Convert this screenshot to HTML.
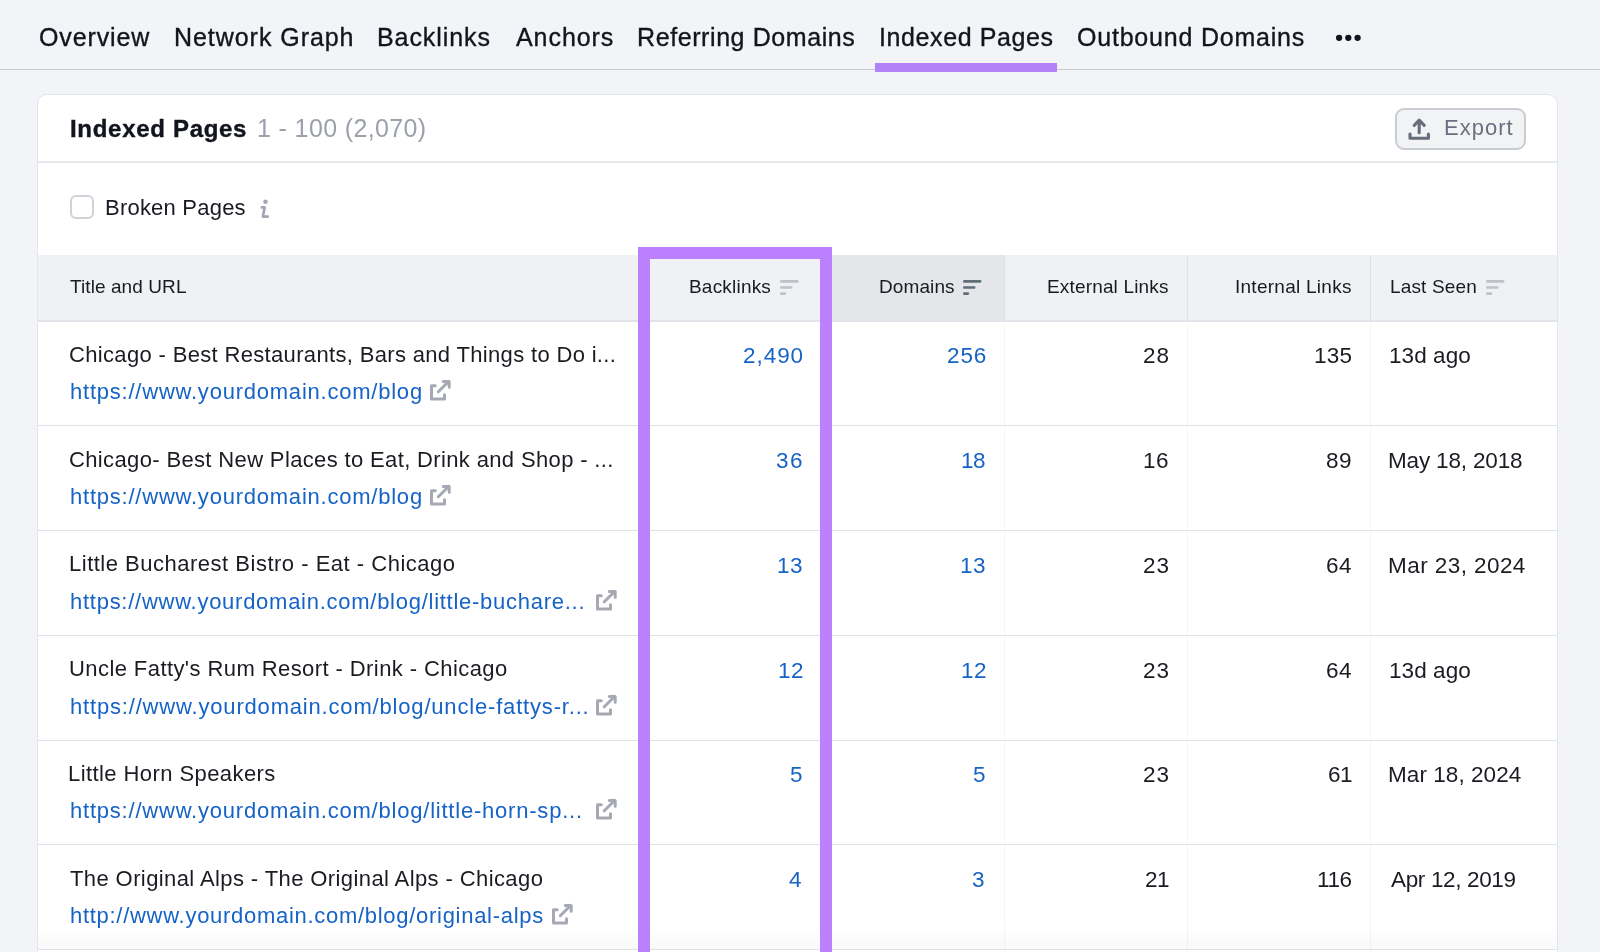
<!DOCTYPE html>
<html><head><meta charset="utf-8"><style>
html,body{margin:0;padding:0;}
body{width:1600px;height:952px;overflow:hidden;background:#f3f4f8;position:relative;font-family:"Liberation Sans", sans-serif;}
.t{position:absolute;white-space:nowrap;will-change:transform;}
</style></head><body>
<div style="position:absolute;left:0px;top:69px;width:1600px;height:1px;background:#c4c7cd;"></div>
<div style="position:absolute;left:875px;top:63px;width:182px;height:9px;background:#b283f8;"></div>
<svg style="position:absolute;left:1330px;top:30px" width="40" height="16" viewBox="0 0 40 16"><circle cx="9.1" cy="7.85" r="3.15" fill="#12151d"/><circle cx="18.3" cy="7.85" r="3.15" fill="#12151d"/><circle cx="27.6" cy="7.85" r="3.15" fill="#12151d"/></svg>
<div style="position:absolute;left:37px;top:94px;width:1519px;height:900px;background:#fff;border:1px solid #e4e5ea;border-radius:10px"></div>
<div style="position:absolute;left:38px;top:161px;width:1519px;height:2px;background:#e7e8ec;"></div>
<div style="position:absolute;left:1395px;top:107.5px;width:126.5px;height:38.3px;background:#f2f3f5;border:2px solid #c9ccd3;border-radius:9px"></div>
<svg style="position:absolute;left:1407px;top:117px" width="24" height="24" viewBox="0 0 24 24"><path d="M12.2 4 V15.8 M7.2 8.3 L12.2 3.2 L17.2 8.3" stroke="#686d7b" stroke-width="3.1" fill="none" stroke-linecap="round" stroke-linejoin="round"/><path d="M3 17 V21.2 H21.4 V17" stroke="#686d7b" stroke-width="3.1" fill="none" stroke-linecap="round" stroke-linejoin="round"/></svg>
<div style="position:absolute;left:69.5px;top:195.2px;width:20px;height:20px;background:#fff;border:2px solid #d0d2d9;border-radius:6px"></div>
<svg style="position:absolute;left:258px;top:198px" width="14" height="22" viewBox="0 0 14 22"><circle cx="7.5" cy="3.8" r="2.3" fill="#a3a7b2"/><path d="M3.8 9.4 L6.6 9.4 L4.9 18.6 L9.7 18.6" stroke="#a3a7b2" stroke-width="2.7" fill="none" stroke-linecap="round" stroke-linejoin="round"/></svg>
<div style="position:absolute;left:38px;top:255px;width:1519px;height:65px;background:#f0f1f4;"></div>
<div style="position:absolute;left:821px;top:255px;width:183px;height:65px;background:#e5e6e9;"></div>
<div style="position:absolute;left:38px;top:320px;width:1519px;height:2px;background:#e3e4e9;"></div>
<div style="position:absolute;left:1004px;top:255px;width:1px;height:65px;background:#e0e1e6;"></div>
<div style="position:absolute;left:1004px;top:322px;width:1px;height:700px;background:#f6f6f7;"></div>
<div style="position:absolute;left:1187px;top:255px;width:1px;height:65px;background:#e0e1e6;"></div>
<div style="position:absolute;left:1187px;top:322px;width:1px;height:700px;background:#f6f6f7;"></div>
<div style="position:absolute;left:1370px;top:255px;width:1px;height:65px;background:#e0e1e6;"></div>
<div style="position:absolute;left:1370px;top:322px;width:1px;height:700px;background:#f6f6f7;"></div>
<svg style="position:absolute;left:780px;top:279px" width="20" height="17" viewBox="0 0 20 17"><path d="M1.3 2.4 H17.2 M1.3 8.5 H11.2 M1.3 14.6 H4.9" stroke="#bcc2c6" stroke-width="2.6" stroke-linecap="round"/></svg>
<svg style="position:absolute;left:963px;top:279px" width="20" height="17" viewBox="0 0 20 17"><path d="M1.3 2.4 H17.2 M1.3 8.5 H11.2 M1.3 14.6 H4.9" stroke="#5f6e78" stroke-width="2.6" stroke-linecap="round"/></svg>
<svg style="position:absolute;left:1486px;top:279px" width="20" height="17" viewBox="0 0 20 17"><path d="M1.3 2.4 H17.2 M1.3 8.5 H11.2 M1.3 14.6 H4.9" stroke="#bcc2c6" stroke-width="2.6" stroke-linecap="round"/></svg>
<svg style="position:absolute;left:429.00px;top:379.20px" width="22" height="22" viewBox="0 0 22 22"><path d="M6.25 6.75 H2.5 V20 H15.5 V15.75" stroke="#a6a9b4" stroke-width="3" fill="none" stroke-linecap="round" stroke-linejoin="round"/><path d="M9.3 12.8 L19.8 2.3 M14.3 2.5 H20.2 V8.2" stroke="#a6a9b4" stroke-width="3" fill="none" stroke-linecap="round" stroke-linejoin="round"/></svg>
<div style="position:absolute;left:38px;top:425px;width:1519px;height:1px;background:#dfe3e5;"></div>
<svg style="position:absolute;left:429.00px;top:484.00px" width="22" height="22" viewBox="0 0 22 22"><path d="M6.25 6.75 H2.5 V20 H15.5 V15.75" stroke="#a6a9b4" stroke-width="3" fill="none" stroke-linecap="round" stroke-linejoin="round"/><path d="M9.3 12.8 L19.8 2.3 M14.3 2.5 H20.2 V8.2" stroke="#a6a9b4" stroke-width="3" fill="none" stroke-linecap="round" stroke-linejoin="round"/></svg>
<div style="position:absolute;left:38px;top:530px;width:1519px;height:1px;background:#dfe3e5;"></div>
<svg style="position:absolute;left:595.00px;top:588.80px" width="22" height="22" viewBox="0 0 22 22"><path d="M6.25 6.75 H2.5 V20 H15.5 V15.75" stroke="#a6a9b4" stroke-width="3" fill="none" stroke-linecap="round" stroke-linejoin="round"/><path d="M9.3 12.8 L19.8 2.3 M14.3 2.5 H20.2 V8.2" stroke="#a6a9b4" stroke-width="3" fill="none" stroke-linecap="round" stroke-linejoin="round"/></svg>
<div style="position:absolute;left:38px;top:635px;width:1519px;height:1px;background:#dfe3e5;"></div>
<svg style="position:absolute;left:595.00px;top:693.60px" width="22" height="22" viewBox="0 0 22 22"><path d="M6.25 6.75 H2.5 V20 H15.5 V15.75" stroke="#a6a9b4" stroke-width="3" fill="none" stroke-linecap="round" stroke-linejoin="round"/><path d="M9.3 12.8 L19.8 2.3 M14.3 2.5 H20.2 V8.2" stroke="#a6a9b4" stroke-width="3" fill="none" stroke-linecap="round" stroke-linejoin="round"/></svg>
<div style="position:absolute;left:38px;top:740px;width:1519px;height:1px;background:#dfe3e5;"></div>
<svg style="position:absolute;left:595.00px;top:798.40px" width="22" height="22" viewBox="0 0 22 22"><path d="M6.25 6.75 H2.5 V20 H15.5 V15.75" stroke="#a6a9b4" stroke-width="3" fill="none" stroke-linecap="round" stroke-linejoin="round"/><path d="M9.3 12.8 L19.8 2.3 M14.3 2.5 H20.2 V8.2" stroke="#a6a9b4" stroke-width="3" fill="none" stroke-linecap="round" stroke-linejoin="round"/></svg>
<div style="position:absolute;left:38px;top:844px;width:1519px;height:1px;background:#dfe3e5;"></div>
<svg style="position:absolute;left:551.00px;top:903.20px" width="22" height="22" viewBox="0 0 22 22"><path d="M6.25 6.75 H2.5 V20 H15.5 V15.75" stroke="#a6a9b4" stroke-width="3" fill="none" stroke-linecap="round" stroke-linejoin="round"/><path d="M9.3 12.8 L19.8 2.3 M14.3 2.5 H20.2 V8.2" stroke="#a6a9b4" stroke-width="3" fill="none" stroke-linecap="round" stroke-linejoin="round"/></svg>
<div style="position:absolute;left:38px;top:925px;width:1519px;height:24px;background:linear-gradient(rgba(0,0,0,0),rgba(0,0,0,0.025));"></div>
<div style="position:absolute;left:38px;top:949px;width:1519px;height:1px;background:#dfe3e5;"></div>
<div class="t" style="left:38.90px;top:25.24px;font-size:25px;line-height:25px;color:#12151d;font-weight:400;letter-spacing:0.871px;-webkit-text-stroke:0.35px #12151d">Overview</div>
<div class="t" style="left:174.10px;top:25.24px;font-size:25px;line-height:25px;color:#12151d;font-weight:400;letter-spacing:0.950px;-webkit-text-stroke:0.35px #12151d">Network Graph</div>
<div class="t" style="left:376.90px;top:25.24px;font-size:25px;line-height:25px;color:#12151d;font-weight:400;letter-spacing:0.925px;-webkit-text-stroke:0.35px #12151d">Backlinks</div>
<div class="t" style="left:515.55px;top:25.24px;font-size:25px;line-height:25px;color:#12151d;font-weight:400;letter-spacing:0.933px;-webkit-text-stroke:0.35px #12151d">Anchors</div>
<div class="t" style="left:636.90px;top:25.24px;font-size:25px;line-height:25px;color:#12151d;font-weight:400;letter-spacing:0.588px;-webkit-text-stroke:0.35px #12151d">Referring Domains</div>
<div class="t" style="left:878.60px;top:25.24px;font-size:25px;line-height:25px;color:#12151d;font-weight:400;letter-spacing:0.600px;-webkit-text-stroke:0.35px #12151d">Indexed Pages</div>
<div class="t" style="left:1076.65px;top:25.24px;font-size:25px;line-height:25px;color:#12151d;font-weight:400;letter-spacing:0.793px;-webkit-text-stroke:0.35px #12151d">Outbound Domains</div>
<div class="t" style="left:69.70px;top:116.88px;font-size:24px;line-height:24px;color:#12151d;font-weight:700;letter-spacing:0.700px;-webkit-text-stroke:0.4px #12151d">Indexed Pages</div>
<div class="t" style="left:256.60px;top:116.14px;font-size:25px;line-height:25px;color:#9ba0ab;font-weight:400;letter-spacing:0.372px">1 - 100 (2,070)</div>
<div class="t" style="left:1443.75px;top:116.98px;font-size:22px;line-height:22px;color:#6b7080;font-weight:400;letter-spacing:1.000px">Export</div>
<div class="t" style="left:105.35px;top:197.38px;font-size:22px;line-height:22px;color:#171a22;font-weight:400;letter-spacing:0.219px">Broken Pages</div>
<div class="t" style="left:70.00px;top:276.72px;font-size:19px;line-height:19px;color:#181b22;font-weight:400;letter-spacing:0.083px">Title and URL</div>
<div class="t" style="left:689.20px;top:276.72px;font-size:19px;line-height:19px;color:#181b22;font-weight:400;letter-spacing:0.200px">Backlinks</div>
<div class="t" style="left:878.70px;top:276.72px;font-size:19px;line-height:19px;color:#181b22;font-weight:400;letter-spacing:0.100px">Domains</div>
<div class="t" style="left:1046.82px;top:276.72px;font-size:19px;line-height:19px;color:#181b22;font-weight:400;letter-spacing:0.161px">External Links</div>
<div class="t" style="left:1234.90px;top:276.72px;font-size:19px;line-height:19px;color:#181b22;font-weight:400;letter-spacing:0.261px">Internal Links</div>
<div class="t" style="left:1390.00px;top:276.72px;font-size:19px;line-height:19px;color:#181b22;font-weight:400;letter-spacing:0.150px">Last Seen</div>
<div class="t" style="left:69.00px;top:343.88px;font-size:22px;line-height:22px;color:#1a1c22;font-weight:400;letter-spacing:0.336px">Chicago - Best Restaurants, Bars and Things to Do i...</div>
<div class="t" style="left:69.50px;top:381.18px;font-size:22px;line-height:22px;color:#1563c6;font-weight:400;letter-spacing:0.773px">https://www.yourdomain.com/blog</div>
<div class="t" style="left:742.75px;top:345.15px;font-size:22.5px;line-height:22.5px;color:#1563c6;font-weight:400;letter-spacing:0.950px">2,490</div>
<div class="t" style="left:946.50px;top:345.15px;font-size:22.5px;line-height:22.5px;color:#1563c6;font-weight:400;letter-spacing:0.900px">256</div>
<div class="t" style="left:1142.88px;top:345.15px;font-size:22.5px;line-height:22.5px;color:#1a1c22;font-weight:400;letter-spacing:1.000px">28</div>
<div class="t" style="left:1314.10px;top:345.15px;font-size:22.5px;line-height:22.5px;color:#1a1c22;font-weight:400;letter-spacing:0.200px">135</div>
<div class="t" style="left:1388.50px;top:345.15px;font-size:22.5px;line-height:22.5px;color:#1a1c22;font-weight:400;letter-spacing:0.067px">13d ago</div>
<div class="t" style="left:69.45px;top:448.68px;font-size:22px;line-height:22px;color:#1a1c22;font-weight:400;letter-spacing:0.358px">Chicago- Best New Places to Eat, Drink and Shop - ...</div>
<div class="t" style="left:69.50px;top:485.98px;font-size:22px;line-height:22px;color:#1563c6;font-weight:400;letter-spacing:0.773px">https://www.yourdomain.com/blog</div>
<div class="t" style="left:775.85px;top:449.95px;font-size:22.5px;line-height:22.5px;color:#1563c6;font-weight:400;letter-spacing:1.400px">36</div>
<div class="t" style="left:961.05px;top:449.95px;font-size:22.5px;line-height:22.5px;color:#1563c6;font-weight:400;letter-spacing:-0.400px">18</div>
<div class="t" style="left:1143.00px;top:449.95px;font-size:22.5px;line-height:22.5px;color:#1a1c22;font-weight:400;letter-spacing:0.500px">16</div>
<div class="t" style="left:1326.20px;top:449.95px;font-size:22.5px;line-height:22.5px;color:#1a1c22;font-weight:400;letter-spacing:0.500px">89</div>
<div class="t" style="left:1388.20px;top:449.95px;font-size:22.5px;line-height:22.5px;color:#1a1c22;font-weight:400;letter-spacing:-0.163px">May 18, 2018</div>
<div class="t" style="left:68.60px;top:553.48px;font-size:22px;line-height:22px;color:#1a1c22;font-weight:400;letter-spacing:0.505px">Little Bucharest Bistro - Eat - Chicago</div>
<div class="t" style="left:69.50px;top:590.78px;font-size:22px;line-height:22px;color:#1563c6;font-weight:400;letter-spacing:0.734px">https://www.yourdomain.com/blog/little-buchare...</div>
<div class="t" style="left:776.70px;top:554.75px;font-size:22.5px;line-height:22.5px;color:#1563c6;font-weight:400;letter-spacing:0.500px">13</div>
<div class="t" style="left:959.70px;top:554.75px;font-size:22.5px;line-height:22.5px;color:#1563c6;font-weight:400;letter-spacing:0.500px">13</div>
<div class="t" style="left:1142.88px;top:554.75px;font-size:22.5px;line-height:22.5px;color:#1a1c22;font-weight:400;letter-spacing:1.000px">23</div>
<div class="t" style="left:1326.20px;top:554.75px;font-size:22.5px;line-height:22.5px;color:#1a1c22;font-weight:400;letter-spacing:0.500px">64</div>
<div class="t" style="left:1388.10px;top:554.75px;font-size:22.5px;line-height:22.5px;color:#1a1c22;font-weight:400;letter-spacing:0.436px">Mar 23, 2024</div>
<div class="t" style="left:68.60px;top:658.28px;font-size:22px;line-height:22px;color:#1a1c22;font-weight:400;letter-spacing:0.419px">Uncle Fatty&#39;s Rum Resort - Drink - Chicago</div>
<div class="t" style="left:69.55px;top:695.58px;font-size:22px;line-height:22px;color:#1563c6;font-weight:400;letter-spacing:0.821px">https://www.yourdomain.com/blog/uncle-fattys-r...</div>
<div class="t" style="left:777.70px;top:659.55px;font-size:22.5px;line-height:22.5px;color:#1563c6;font-weight:400;letter-spacing:0.500px">12</div>
<div class="t" style="left:960.70px;top:659.55px;font-size:22.5px;line-height:22.5px;color:#1563c6;font-weight:400;letter-spacing:0.500px">12</div>
<div class="t" style="left:1142.88px;top:659.55px;font-size:22.5px;line-height:22.5px;color:#1a1c22;font-weight:400;letter-spacing:1.000px">23</div>
<div class="t" style="left:1326.20px;top:659.55px;font-size:22.5px;line-height:22.5px;color:#1a1c22;font-weight:400;letter-spacing:0.500px">64</div>
<div class="t" style="left:1388.50px;top:659.55px;font-size:22.5px;line-height:22.5px;color:#1a1c22;font-weight:400;letter-spacing:0.067px">13d ago</div>
<div class="t" style="left:68.05px;top:763.08px;font-size:22px;line-height:22px;color:#1a1c22;font-weight:400;letter-spacing:0.421px">Little Horn Speakers</div>
<div class="t" style="left:69.60px;top:800.38px;font-size:22px;line-height:22px;color:#1563c6;font-weight:400;letter-spacing:0.784px">https://www.yourdomain.com/blog/little-horn-sp...</div>
<div class="t" style="left:789.70px;top:764.35px;font-size:22.5px;line-height:22.5px;color:#1563c6;font-weight:400;letter-spacing:0.500px">5</div>
<div class="t" style="left:972.70px;top:764.35px;font-size:22.5px;line-height:22.5px;color:#1563c6;font-weight:400;letter-spacing:0.500px">5</div>
<div class="t" style="left:1142.88px;top:764.35px;font-size:22.5px;line-height:22.5px;color:#1a1c22;font-weight:400;letter-spacing:1.000px">23</div>
<div class="t" style="left:1328.10px;top:764.35px;font-size:22.5px;line-height:22.5px;color:#1a1c22;font-weight:400;letter-spacing:-0.400px">61</div>
<div class="t" style="left:1388.33px;top:764.35px;font-size:22.5px;line-height:22.5px;color:#1a1c22;font-weight:400;letter-spacing:0.063px">Mar 18, 2024</div>
<div class="t" style="left:70.40px;top:867.88px;font-size:22px;line-height:22px;color:#1a1c22;font-weight:400;letter-spacing:0.400px">The Original Alps - The Original Alps - Chicago</div>
<div class="t" style="left:69.60px;top:905.18px;font-size:22px;line-height:22px;color:#1563c6;font-weight:400;letter-spacing:0.711px">http://www.yourdomain.com/blog/original-alps</div>
<div class="t" style="left:789.45px;top:869.15px;font-size:22.5px;line-height:22.5px;color:#1563c6;font-weight:400;letter-spacing:0.500px">4</div>
<div class="t" style="left:972.30px;top:869.15px;font-size:22.5px;line-height:22.5px;color:#1563c6;font-weight:400;letter-spacing:0.500px">3</div>
<div class="t" style="left:1144.62px;top:869.15px;font-size:22.5px;line-height:22.5px;color:#1a1c22;font-weight:400;letter-spacing:-0.400px">21</div>
<div class="t" style="left:1317.35px;top:869.15px;font-size:22.5px;line-height:22.5px;color:#1a1c22;font-weight:400;letter-spacing:-0.400px">116</div>
<div class="t" style="left:1390.70px;top:869.15px;font-size:22.5px;line-height:22.5px;color:#1a1c22;font-weight:400;letter-spacing:-0.345px">Apr 12, 2019</div>
<div style="position:absolute;left:637.5px;top:247px;width:170.5px;height:800px;border:12px solid #ba80fd;border-bottom:none"></div>
</body></html>
